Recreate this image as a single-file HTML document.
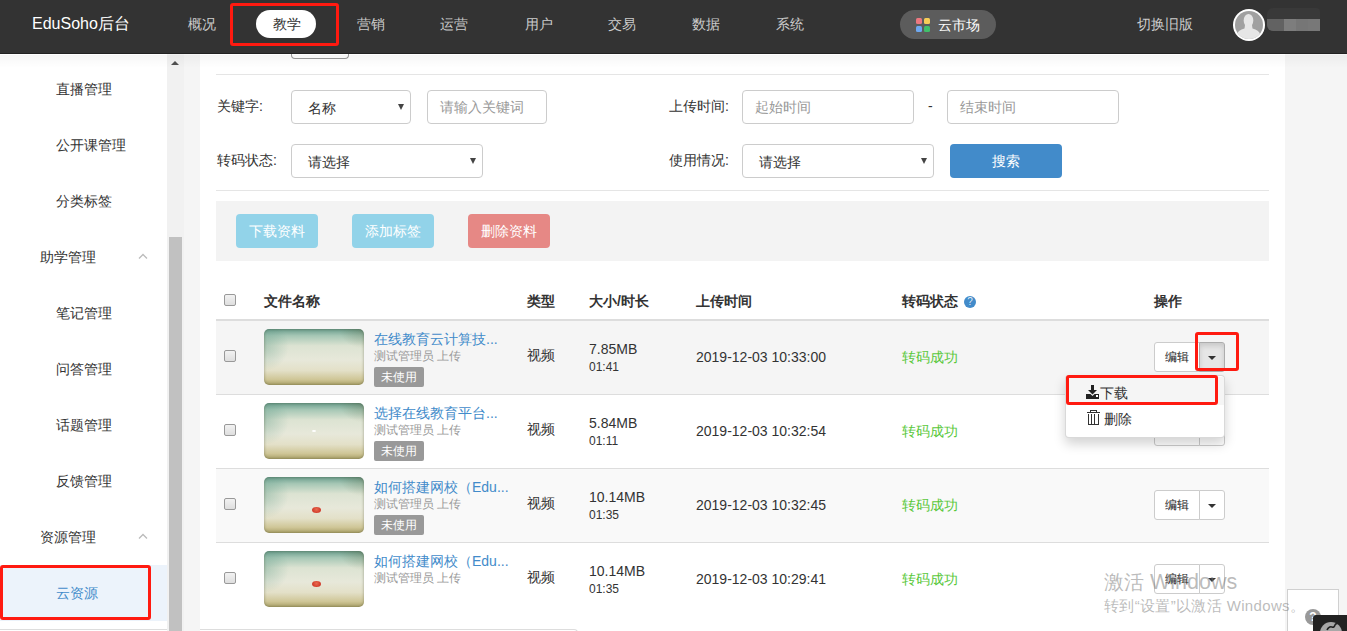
<!DOCTYPE html>
<html><head><meta charset="utf-8">
<style>
*{box-sizing:border-box;margin:0;padding:0}
html,body{width:1347px;height:631px;overflow:hidden;background:#f5f5f5;font-family:"Liberation Sans",sans-serif;font-size:14px;color:#333}
.abs{position:absolute}
#hdr{position:absolute;left:0;top:0;width:1347px;height:54px;background:#333;z-index:10;border-bottom:1px solid #222}
#shd{position:absolute;left:0;top:55px;width:1347px;height:13px;background:linear-gradient(rgba(0,0,0,.035),rgba(0,0,0,0));z-index:9}
#hdr .t{position:absolute;top:15px;color:#ccc;font-size:14px;line-height:18px;white-space:nowrap}
#logo{position:absolute;left:32px;top:14px;color:#fff;font-size:16px;line-height:20px}
.pill{position:absolute;left:256px;top:10px;width:60px;height:28px;border-radius:14px;background:#fff}
#side{position:absolute;left:0;top:54px;width:167px;height:577px;background:#fff}
#side .it{position:absolute;left:56px;font-size:14px;line-height:18px;color:#333;white-space:nowrap}
#side .grp{left:40px}
#panel{position:absolute;left:200px;top:54px;width:1085px;height:577px;background:#fff}
.hl{position:absolute;height:1px;background:#e5e5e5}
.lbl{position:absolute;font-size:14px;line-height:18px;color:#333;white-space:nowrap}
.inp{position:absolute;height:34px;border:1px solid #ccc;border-radius:4px;background:#fff;font-size:14px;line-height:18px;color:#999;padding:7px 12px;white-space:nowrap}
.sel{color:#333;padding-left:16px;padding-top:8px}
.sel:after{content:"";position:absolute;right:6px;top:13px;border-left:3.5px solid transparent;border-right:3.5px solid transparent;border-top:6px solid #444}
.btn{position:absolute;height:34px;border-radius:4px;color:#fff;font-size:14px;line-height:34px;text-align:center;white-space:nowrap}
.th{position:absolute;top:292px;font-weight:bold;font-size:14px;line-height:18px;color:#333;white-space:nowrap}
.row{position:absolute;left:216px;width:1053px;height:74px;border-top:1px solid #ddd}
.cb{position:absolute;width:12px;height:12px;border:1px solid #999;border-radius:2px;background:linear-gradient(#f2f2f2,#dedede)}
.thumb{position:absolute;width:100px;height:56px;border-radius:5px;box-shadow:inset 0 0 3px rgba(50,60,30,.45);background:radial-gradient(ellipse 25% 45% at 0% 30%,rgba(60,135,115,.3) 0%,rgba(60,135,115,0) 100%),radial-gradient(ellipse 25% 35% at 100% 0%,rgba(80,95,60,.3) 0%,rgba(80,95,60,0) 100%),linear-gradient(180deg,#6a9c8c 0%,#a6c7b5 12%,#dce3d2 30%,#e7e8da 55%,#e3e0c8 74%,#cfc697 90%,#aba169 100%);overflow:hidden}
.ttl{position:absolute;color:#428bca;font-size:14px;line-height:18px;white-space:nowrap}
.up{position:absolute;color:#999;font-size:12px;line-height:16px;white-space:nowrap}
.tag{position:absolute;width:50px;height:20px;background:#999;color:#fff;font-size:12px;line-height:20px;text-align:center;border-radius:2px}
.cell{position:absolute;font-size:14px;line-height:18px;color:#333;white-space:nowrap}
.sm{font-size:12px;line-height:14px}
.ok{color:#5ac83c}
.bgrp{position:absolute;width:71px;height:30px}
.bgrp .e{position:absolute;left:0;top:0;width:46px;height:30px;border:1px solid #ccc;border-radius:3px 0 0 3px;background:#fff;font-size:12px;line-height:28px;text-align:center;color:#222}
.bgrp .c{position:absolute;left:45px;top:0;width:26px;height:30px;border:1px solid #ccc;border-radius:0 3px 3px 0;background:#fff}
.bgrp .c:after{content:"";position:absolute;left:8px;top:13px;border-left:4px solid transparent;border-right:4px solid transparent;border-top:4px solid #333}
.bgrp .c.on{background:#e6e6e6;border-color:#adadad;box-shadow:inset 0 3px 5px rgba(0,0,0,.125)}
.red{position:absolute;border:3px solid #ff1a10;border-radius:3px}
</style></head><body>

<div id="hdr">
  <div id="logo">EduSoho后台</div>
  <div class="t" style="left:188px">概况</div>
  <div class="pill"></div>
  <div class="t" style="left:273px;color:#333">教学</div>
  <div class="t" style="left:357px">营销</div>
  <div class="t" style="left:440px">运营</div>
  <div class="t" style="left:525px">用户</div>
  <div class="t" style="left:608px">交易</div>
  <div class="t" style="left:692px">数据</div>
  <div class="t" style="left:776px">系统</div>
  <div class="abs" style="left:900px;top:10px;width:96px;height:29px;border-radius:15px;background:#5c5c5c"></div>
  <div class="t" style="left:938px;top:16px;color:#fff">云市场</div>
  <svg class="abs" style="left:916px;top:18px" width="14" height="14" viewBox="0 0 14 14"><rect x="0" y="0" width="6" height="6" rx="1.5" fill="#ec7880"/><rect x="8" y="0" width="6" height="6" rx="1.5" fill="#f7cd57"/><rect x="0" y="8" width="6" height="6" rx="1.5" fill="#6fa8ef"/><rect x="8" y="8" width="6" height="6" rx="1.5" fill="#41bf6a"/></svg>
  <div class="t" style="left:1137px">切换旧版</div>
  <svg class="abs" style="left:1233px;top:9px" width="32" height="32" viewBox="0 0 32 32"><defs><clipPath id="avc"><circle cx="16" cy="16" r="14"/></clipPath></defs><circle cx="16" cy="16" r="16" fill="#fff"/><circle cx="16" cy="16" r="14" fill="#a0a0a0"/><g clip-path="url(#avc)" fill="#e6e6e6"><ellipse cx="15.5" cy="11.5" rx="4.8" ry="6.6"/><path d="M12 16 L19 16 L19.5 19.5 Q26 21 27 25 L28 34 H3 L4 25 Q5 21 11.5 19.5z"/></g></svg>
  <div class="abs" style="left:1267px;top:8px;width:53px;height:23px;border-radius:6px 4px 0 6px;background:#393939;overflow:hidden"><div class="abs" style="left:0;top:11px;width:17px;height:12px;background:#626262"></div><div class="abs" style="left:17px;top:11px;width:12px;height:12px;background:#7d7d7d"></div><div class="abs" style="left:29px;top:11px;width:12px;height:12px;background:#767676"></div><div class="abs" style="left:41px;top:11px;width:12px;height:12px;background:#787878"></div></div>
</div>
<div class="red" style="left:230px;top:3px;width:109px;height:43px;z-index:11"></div>

<div id="side">
  <div class="it" style="top:26px">直播管理</div>
  <div class="it" style="top:82px">公开课管理</div>
  <div class="it" style="top:138px">分类标签</div>
  <div class="it grp" style="top:194px">助学管理</div>
  <svg class="abs" style="left:138px;top:199px" width="10" height="7" viewBox="0 0 10 7"><path d="M1 5.5L5 1.5L9 5.5" fill="none" stroke="#bbb" stroke-width="1.3"/></svg>
  <div class="it" style="top:250px">笔记管理</div>
  <div class="it" style="top:306px">问答管理</div>
  <div class="it" style="top:362px">话题管理</div>
  <div class="it" style="top:418px">反馈管理</div>
  <div class="it grp" style="top:474px">资源管理</div>
  <svg class="abs" style="left:138px;top:479px" width="10" height="7" viewBox="0 0 10 7"><path d="M1 5.5L5 1.5L9 5.5" fill="none" stroke="#bbb" stroke-width="1.3"/></svg>
  <div class="abs" style="left:0;top:511px;width:167px;height:56px;background:#ecf3fb"></div>
  <div class="it" style="top:530px;color:#428bca">云资源</div>
</div>
<div class="red" style="left:0px;top:565px;width:151px;height:55px"></div>
<div class="abs" style="left:0;top:629px;width:167px;height:1px;background:#ddd"></div>
<div class="abs" style="left:167px;top:54px;width:17px;height:577px;background:#f1f1f1"></div>
<div class="abs" style="left:169px;top:237px;width:13px;height:394px;background:#c1c1c1"></div>
<div class="abs" style="left:171px;top:61px;width:0;height:0;border-left:4px solid transparent;border-right:4px solid transparent;border-bottom:4px solid #505050"></div>

<div id="panel"></div>
<div class="abs" style="left:291px;top:40px;width:58px;height:19px;border:1px solid #999;border-top:none;border-radius:0 0 4px 4px;background:#fff"></div>
<div class="hl" style="left:216px;top:74px;width:1053px"></div>

<div class="lbl" style="left:217px;top:97px">关键字:</div>
<div class="inp sel" style="left:291px;top:90px;width:120px">名称</div>
<div class="inp" style="left:427px;top:90px;width:120px">请输入关键词</div>
<div class="lbl" style="left:669px;top:97px">上传时间:</div>
<div class="inp" style="left:742px;top:90px;width:172px">起始时间</div>
<div class="lbl" style="left:928px;top:97px">-</div>
<div class="inp" style="left:947px;top:90px;width:172px">结束时间</div>

<div class="lbl" style="left:217px;top:151px">转码状态:</div>
<div class="inp sel" style="left:291px;top:144px;width:192px">请选择</div>
<div class="lbl" style="left:669px;top:151px">使用情况:</div>
<div class="inp sel" style="left:742px;top:144px;width:192px">请选择</div>
<div class="btn" style="left:950px;top:144px;width:112px;background:#428bca">搜索</div>
<div class="hl" style="left:216px;top:190px;width:1053px"></div>

<div class="abs" style="left:216px;top:201px;width:1053px;height:60px;background:#f3f3f3"></div>
<div class="btn" style="left:236px;top:214px;width:82px;background:#92d3e9">下载资料</div>
<div class="btn" style="left:352px;top:214px;width:82px;background:#92d3e9">添加标签</div>
<div class="btn" style="left:468px;top:214px;width:82px;background:#e68885">删除资料</div>

<div class="cb" style="left:224px;top:294px"></div>
<div class="th" style="left:264px">文件名称</div>
<div class="th" style="left:527px">类型</div>
<div class="th" style="left:589px">大小/时长</div>
<div class="th" style="left:696px">上传时间</div>
<div class="th" style="left:902px">转码状态</div>
<div class="abs" style="left:964px;top:296px;width:12px;height:12px;border-radius:50%;background:#428bca;color:rgba(255,255,255,.85);font-size:10px;line-height:12px;text-align:center">?</div>
<div class="th" style="left:1154px">操作</div>
<div class="row" style="top:320px;background:#f5f5f5"></div>
<div class="cb" style="left:224px;top:350px"></div>
<div class="thumb" style="left:264px;top:329px"></div>
<div class="ttl" style="left:374px;top:330px">在线教育云计算技...</div>
<div class="up" style="left:374px;top:348px">测试管理员 上传</div>
<div class="tag" style="left:374px;top:367px">未使用</div>
<div class="cell" style="left:527px;top:346px">视频</div>
<div class="cell" style="left:589px;top:340px">7.85MB</div>
<div class="cell sm" style="left:589px;top:360px">01:41</div>
<div class="cell" style="left:696px;top:348px">2019-12-03 10:33:00</div>
<div class="cell ok" style="left:902px;top:348px">转码成功</div>
<div class="bgrp" style="left:1154px;top:342px"><div class="e">编辑</div><div class="c on"></div></div>
<div class="row" style="top:394px;background:#fff"></div>
<div class="cb" style="left:224px;top:424px"></div>
<div class="thumb" style="left:264px;top:403px"><div class="abs" style="left:48px;top:27px;width:4px;height:2px;border-radius:50%;background:#fff"></div></div>
<div class="ttl" style="left:374px;top:404px">选择在线教育平台...</div>
<div class="up" style="left:374px;top:422px">测试管理员 上传</div>
<div class="tag" style="left:374px;top:441px">未使用</div>
<div class="cell" style="left:527px;top:420px">视频</div>
<div class="cell" style="left:589px;top:414px">5.84MB</div>
<div class="cell sm" style="left:589px;top:434px">01:11</div>
<div class="cell" style="left:696px;top:422px">2019-12-03 10:32:54</div>
<div class="cell ok" style="left:902px;top:422px">转码成功</div>
<div class="bgrp" style="left:1154px;top:416px"><div class="e">编辑</div><div class="c"></div></div>
<div class="row" style="top:468px;background:#f9f9f9"></div>
<div class="cb" style="left:224px;top:498px"></div>
<div class="thumb" style="left:264px;top:477px"><div class="abs" style="left:48px;top:30px;width:9px;height:6px;border-radius:50%;background:radial-gradient(circle at 50% 40%,#e86a50,#c8261a)"></div></div>
<div class="ttl" style="left:374px;top:478px">如何搭建网校（Edu...</div>
<div class="up" style="left:374px;top:496px">测试管理员 上传</div>
<div class="tag" style="left:374px;top:515px">未使用</div>
<div class="cell" style="left:527px;top:494px">视频</div>
<div class="cell" style="left:589px;top:488px">10.14MB</div>
<div class="cell sm" style="left:589px;top:508px">01:35</div>
<div class="cell" style="left:696px;top:496px">2019-12-03 10:32:45</div>
<div class="cell ok" style="left:902px;top:496px">转码成功</div>
<div class="bgrp" style="left:1154px;top:490px"><div class="e">编辑</div><div class="c"></div></div>
<div class="row" style="top:542px;background:#fff"></div>
<div class="cb" style="left:224px;top:572px"></div>
<div class="thumb" style="left:264px;top:551px"><div class="abs" style="left:48px;top:30px;width:9px;height:6px;border-radius:50%;background:radial-gradient(circle at 50% 40%,#e86a50,#c8261a)"></div></div>
<div class="ttl" style="left:374px;top:552px">如何搭建网校（Edu...</div>
<div class="up" style="left:374px;top:570px">测试管理员 上传</div>

<div class="cell" style="left:527px;top:568px">视频</div>
<div class="cell" style="left:589px;top:562px">10.14MB</div>
<div class="cell sm" style="left:589px;top:582px">01:35</div>
<div class="cell" style="left:696px;top:570px">2019-12-03 10:29:41</div>
<div class="cell ok" style="left:902px;top:570px">转码成功</div>
<div class="bgrp" style="left:1154px;top:564px"><div class="e">编辑</div><div class="c"></div></div>
<div class="abs" style="left:216px;top:319px;width:1053px;height:2px;background:#ddd"></div>
<div class="abs" style="left:200px;top:629px;width:378px;height:10px;border-top:1px solid #ddd;border-right:1px solid #ddd;border-top-right-radius:4px"></div>
<div class="red" style="left:1195px;top:332px;width:44px;height:39px"></div>
<div class="abs" style="left:1065px;top:375px;width:160px;height:63px;background:#fff;border:1px solid rgba(0,0,0,.15);border-radius:4px;box-shadow:0 6px 12px rgba(0,0,0,.175)"></div>
<div class="abs" style="left:1066px;top:377px;width:158px;height:28px;background:#f5f5f5"></div>
<svg class="abs" style="left:1086px;top:385px" width="13" height="14" viewBox="0 0 13 14"><rect x="5" y="0" width="3" height="6" fill="#222"/><path d="M2 5h9l-4.5 4.5z" fill="#222"/><path d="M0 9h4.5l2 2 2-2H13v5H0z" fill="#222"/><rect x="10" y="10" width="2" height="2" fill="#fff"/></svg>
<div class="cell" style="left:1100px;top:384px">下载</div>
<svg class="abs" style="left:1087px;top:409px" width="14" height="17" viewBox="0 0 14 17"><rect x="3" y="1" width="7" height="1" fill="#333"/><rect x="3" y="1" width="1" height="2" fill="#333"/><rect x="9" y="1" width="1" height="2" fill="#333"/><rect x="0" y="3" width="13" height="1" fill="#333"/><rect x="1" y="5" width="1" height="11" fill="#333"/><rect x="4" y="5" width="1" height="11" fill="#333"/><rect x="7" y="5" width="1" height="11" fill="#333"/><rect x="11" y="5" width="1" height="11" fill="#333"/><rect x="1" y="15" width="11" height="1" fill="#333"/></svg>
<div class="cell" style="left:1104px;top:410px">删除</div>
<div class="red" style="left:1066px;top:375px;width:152px;height:30px"></div>
<div class="abs" style="left:1287px;top:589px;width:52px;height:50px;background:#fff;border:1px solid #d0d0d0"></div>
<div class="abs" style="left:1305px;top:609px;width:16px;height:16px;border-radius:50%;background:#999;color:#fff;font-size:12px;line-height:16px;text-align:center;font-weight:bold">?</div>
<div class="abs" style="left:1313px;top:615px;width:34px;height:17px;background:#222;border-top-left-radius:3px"></div>
<div class="abs" style="left:1320px;top:622px;width:22px;height:22px;border-radius:50%;background:#a8a8a8"></div>
<svg class="abs" style="left:1326px;top:623px" width="12" height="8" viewBox="0 0 12 8"><path d="M1 7 Q3 3 6 4 Q8 5 9 2 Q10 0 11.5 1" fill="none" stroke="#222" stroke-width="1.6"/></svg>
<div class="abs" style="left:1104px;top:570px;font-size:20px;line-height:24px;color:rgba(120,120,120,.5);white-space:nowrap">激活<span style="font-size:21.5px"> Windows</span></div>
<div class="abs" style="left:1104px;top:596px;font-size:15px;line-height:19px;letter-spacing:.35px;color:rgba(120,120,120,.5);white-space:nowrap">转到“设置”以激活 Windows。</div>
<div id="shd"></div>
</body></html>
